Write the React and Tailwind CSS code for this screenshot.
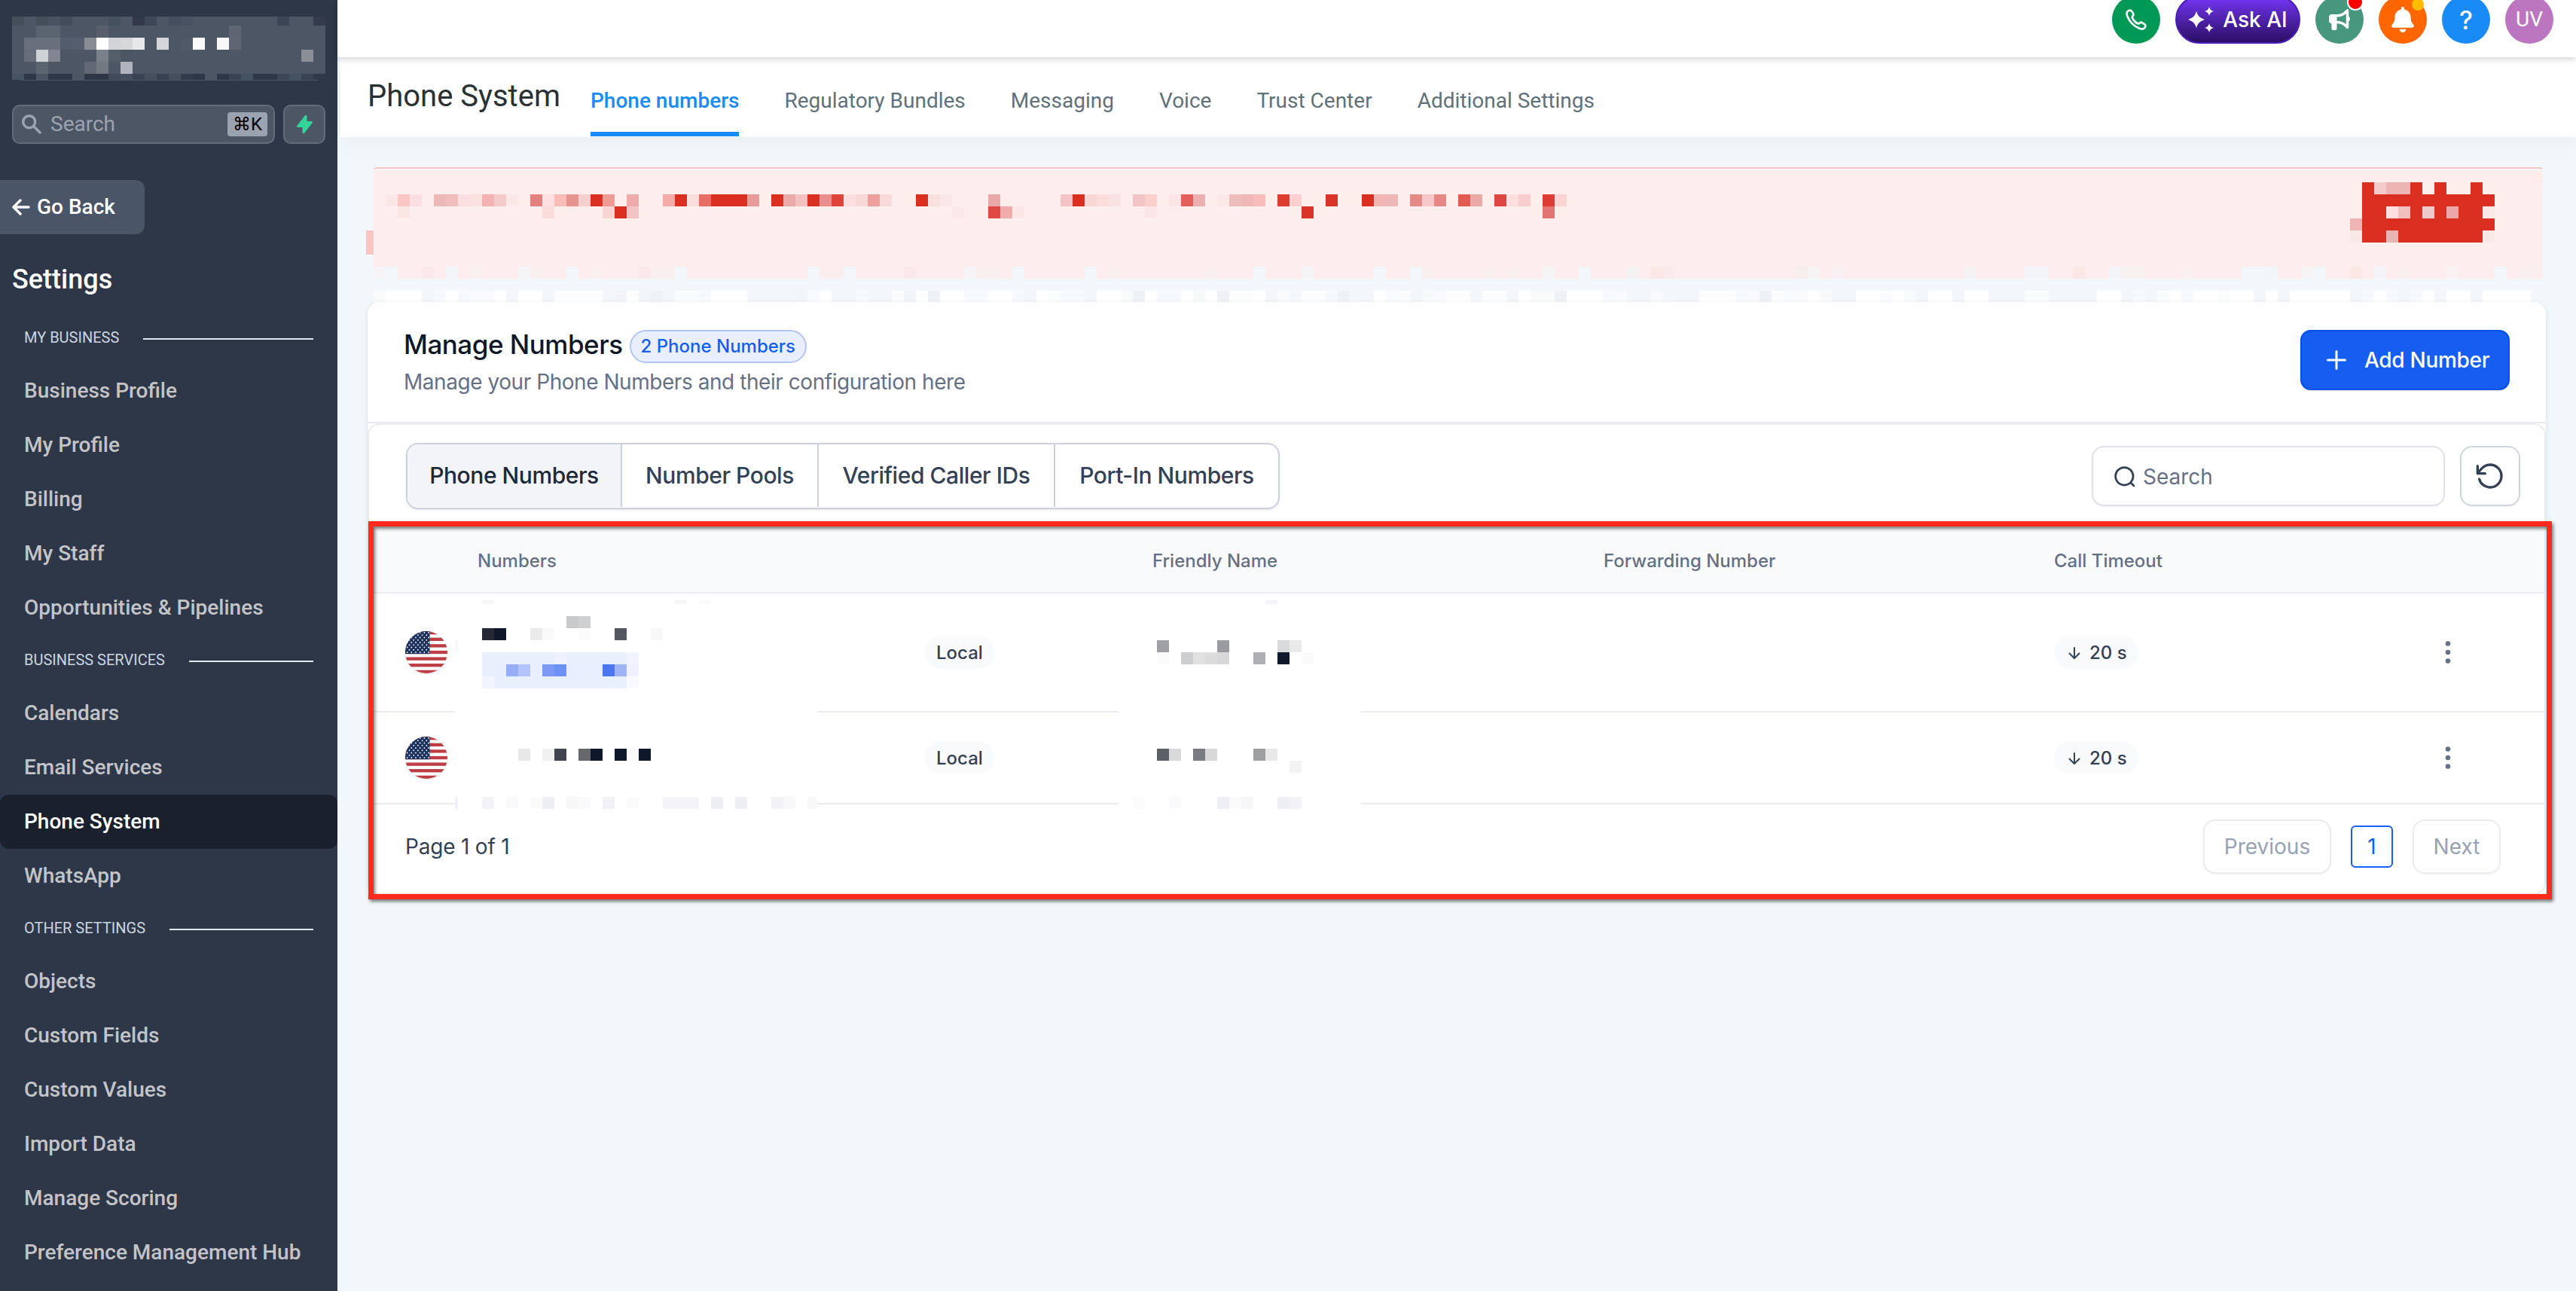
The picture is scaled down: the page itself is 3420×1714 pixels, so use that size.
import React from 'react';
import { FaBell, FaBullhorn } from 'react-icons/fa6';

const CELL = 16;

const SECTIONS = [
  {
    title: 'MY BUSINESS',
    items: ['Business Profile', 'My Profile', 'Billing', 'My Staff', 'Opportunities & Pipelines'],
  },
  {
    title: 'BUSINESS SERVICES',
    items: ['Calendars', 'Email Services', 'Phone System', 'WhatsApp'],
  },
  {
    title: 'OTHER SETTINGS',
    items: ['Objects', 'Custom Fields', 'Custom Values', 'Import Data', 'Manage Scoring', 'Preference Management Hub'],
  },
];

const HEADER_TABS = ['Phone numbers', 'Regulatory Bundles', 'Messaging', 'Voice', 'Trust Center', 'Additional Settings'];

// Mosaic cells: [column, row, span, color, height in rows]
const ACCOUNT_CELLS = [
  [0, -0.75, 26, '#4d5665', 0.75], [0, 0, 26, '#4d5665', 4],
  [0, -0.75, 1, '#454f5c', 0.75], [2, -0.75, 1, '#454f5c', 0.75], [3, -0.75, 1, '#495362', 0.75], [4, -0.75, 1, '#434c5b', 0.75],
  [8, -0.75, 1, '#445260', 0.75], [10, -0.75, 1, '#32394b', 0.75], [11, -0.75, 1, '#3c4656', 0.75], [13, -0.75, 1, '#444e5e', 0.75],
  [14, -0.75, 1, '#495262', 0.75], [22, -0.75, 1, '#3c4555', 0.75], [25, -0.75, 1, '#333b4d', 0.75],
  [2, 0, 2, '#59646f'], [7, 0, 1, '#5a5f6d'], [18, 0, 1, '#5e6572'],
  [1, 1, 3, '#69707c'], [4, 1, 1, '#525c6d'], [5, 1, 1, '#555e6e'], [6, 1, 1, '#888d94'], [7, 1, 1, '#ffffff'],
  [8, 1, 1, '#d3d4d8'], [9, 1, 1, '#d6d7d9'], [10, 1, 1, '#e7e8ea'], [12, 1, 1, '#d4d5d9'], [13, 1, 1, '#4b5765'],
  [14, 1, 1, '#505968'], [15, 1, 1, '#f9f9f9'], [17, 1, 1, '#f7f7f7'], [18, 1, 1, '#5f6571'],
  [1, 2, 1, '#676d79'], [2, 2, 1, '#ced2d4'], [3, 2, 1, '#818690'], [7, 2, 1, '#79828a'], [8, 2, 1, '#545f6a'], [24, 2, 1, '#8b8f95'],
  [2, 3, 1, '#5a666f'], [6, 3, 1, '#636874'], [7, 3, 1, '#727981'], [9, 3, 1, '#b1b4bd'],
  [0, 4, 1, '#455363', 0.5], [2, 4, 1, '#4d5665', 0.5], [5, 4, 1, '#4d5665', 0.5], [8, 4, 1, '#404a5a', 0.5], [9, 4, 1, '#444e5e', 0.5],
  [10, 4, 1, '#3a4454', 0.5], [11, 4, 1, '#454f5c', 0.5], [12, 4, 1, '#384252', 0.5], [13, 4, 1, '#454f5c', 0.5], [14, 4, 1, '#333c4d', 0.5],
  [16, 4, 1, '#4d5665', 0.5], [18, 4, 1, '#3a4454', 0.5], [19, 4, 1, '#445261', 0.5], [22, 4, 1, '#3c4656', 0.5], [23, 4, 1, '#445261', 0.5],
  [24, 4, 1, '#3a4354', 0.5], [25, 4, 1, '#303849', 0.5],
];

const R = '#da2e20';
const BG = '#f1f7fa';
const BANNER_CELLS = [
  [0, 0, 180, '#fceeec', 9],
  [-0.625, 5, 0.625, '#f8c5c4', 2], [179, 0, 1, '#fdebea'],
  // first text line
  [1, 2, 1, '#fbe6e6'], [2, 2, 1, '#fac6c4'], [3, 2, 1, '#fbdfe0'], [5, 2, 1, '#edb8b8'], [6, 2, 1, '#f0bdbc'], [7, 2, 1, '#fbdfe0'],
  [8, 2, 1, '#f9e2e0'], [9, 2, 1, '#f4b3b2'], [10, 2, 1, '#f5cbca'], [11, 2, 1, '#fae8e7'], [13, 2, 1, '#e37f7c'], [14, 2, 1, '#fbdfe1'],
  [15, 2, 1, '#f8bcb9'], [16, 2, 1, '#e79491'], [17, 2, 1, '#f4cfce'], [18, 2, 1, R], [19, 2, 1, '#ef9a94'], [21, 2, 1, '#efabab'],
  [24, 2, 1, '#f4acab'], [25, 2, 1, R], [26, 2, 1, '#f9dede'], [27, 2, 1, '#e56d66'], [28, 2, 3, R], [31, 2, 1, '#e79a98'],
  [33, 2, 1, R], [34, 2, 1, '#ebaaa9'], [35, 2, 1, '#f2c2c2'], [36, 2, 1, R], [37, 2, 1, '#e9908f'], [38, 2, 1, '#e04438'],
  [39, 2, 1, '#fbdedf'], [40, 2, 1, '#f8d8d6'], [41, 2, 1, '#eea09d'], [42, 2, 1, '#f9dada'], [45, 2, 1, R], [46, 2, 1, '#f8e0df'],
  [47, 2, 1, '#fae7e7'], [51, 2, 1, '#eaa9a8'], [57, 2, 1, '#f2c4c6'], [58, 2, 1, R], [59, 2, 1, '#f8d6d4'], [60, 2, 1, '#fbdedb'],
  [61, 2, 1, '#f8e2e2'], [63, 2, 1, '#f2c4c6'], [64, 2, 1, '#fad0cc'], [66, 2, 1, '#fbe4e5'], [67, 2, 1, '#e3605a'], [68, 2, 1, '#edb0b0'],
  [70, 2, 1, '#fae9e7'], [71, 2, 1, '#edbdbc'], [72, 2, 1, '#edb8b5'], [73, 2, 1, '#f8bdba'], [75, 2, 1, '#dd3c31'], [76, 2, 1, '#f9cfcf'],
  [79, 2, 1, '#da3429'], [82, 2, 1, R], [83, 2, 1, '#f1b5b3'], [84, 2, 1, '#eeb8b9'], [86, 2, 1, '#e58987'], [87, 2, 1, '#f5c7c8'],
  [88, 2, 1, '#e48785'], [90, 2, 1, '#e25a52'], [91, 2, 1, '#eda9a6'], [93, 2, 1, '#dc4541'], [94, 2, 1, '#f9dfde'], [95, 2, 1, '#f7cdce'],
  [97, 2, 1, '#dd3c33'], [98, 2, 1, '#fbd3d2'],
  // second text line
  [2, 3, 1, '#fbe6e4'], [14, 3, 1, '#fadcda'], [19, 3, 1, '#f7d5d3'], [20, 3, 1, R], [21, 3, 1, '#f2c3c4'], [48, 3, 1, '#fae9e8'],
  [51, 3, 1, '#df4843'], [52, 3, 1, '#f1abaa'], [53, 3, 1, '#fbe5e6'], [64, 3, 1, '#fce5e9'], [77, 3, 1, '#da3429'], [97, 3, 1, '#e27473'],
  // action button
  [165, 1, 1, R], [166, 1, 1, '#f3cbca'], [167, 1, 2, '#ebb5b5'], [169, 1, 1, R], [171, 1, 1, R], [174, 1, 1, R],
  [165, 2, 11, R],
  [165, 3, 10, R], [167, 3, 1, '#fddfdf'], [168, 3, 1, '#f1bfbf'], [170, 3, 1, '#efcaca'], [172, 3, 1, '#eaa9a8'], [175, 3, 1, '#fbe8e8'],
  [164, 4, 1, '#efb4b4'], [165, 4, 11, R],
  [164, 5, 1, '#f8e9e8'], [165, 5, 10, R], [167, 5, 1, '#e9b5b4'], [175, 5, 1, '#f8e8e7'],
  // bottom edge
  [0, 8, 1, '#f6f4f6'], [1, 8, 1, BG], [4, 8, 1, '#fbe9e9'], [6, 8, 1, '#f3f6f9'], [8, 8, 1, '#f9f1f0'], [12, 8, 1, '#f5f5f7'],
  [13, 8, 1, '#f9efee'], [16, 8, 1, BG], [18, 8, 1, '#f9f0ef'], [22, 8, 1, '#fbe9e9'], [23, 8, 2, '#f9efed'], [25, 8, 1, BG],
  [36, 8, 1, BG], [37, 8, 2, '#f9eeed'], [39, 8, 1, BG], [44, 8, 1, '#fbe9e9'], [49, 8, 1, '#f6f4f6'], [50, 8, 1, '#f9efee'],
  [51, 8, 1, '#f9f0ee'], [53, 8, 1, BG], [59, 8, 1, BG], [61, 8, 1, '#f9efef'], [69, 8, 1, '#f9f0ee'], [73, 8, 1, BG],
  [77, 8, 1, '#f4f4f6'], [83, 8, 1, BG], [86, 8, 1, BG], [87, 8, 1, '#f9efef'], [92, 8, 1, '#f9efee'], [94, 8, 1, '#f9efee'],
  [97, 8, 1, '#f5f5f5'], [100, 8, 1, BG], [104, 8, 1, '#f5f2f4'], [106, 8, 1, '#fbe7e4'], [107, 8, 1, '#fbeaea'], [118, 8, 1, '#f5eeec'],
  [119, 8, 1, '#f5f3f3'], [121, 8, 1, '#f8f0f2'], [132, 8, 1, '#f5f2f4'], [137, 8, 2, '#f3f4f7'], [141, 8, 1, '#fbe7e4'], [144, 8, 1, '#f3f4f7'],
  [145, 8, 2, '#f7f1f0'], [150, 8, 1, '#faf0ee'], [155, 8, 2, BG], [157, 8, 1, '#f3f6f8'], [160, 8, 1, '#f6f4f4'], [161, 8, 1, BG],
  [164, 8, 1, '#fbe8e5'], [166, 8, 1, '#f4f4f8'], [168, 8, 1, '#f9efee'], [172, 8, 1, '#f8f2f2'], [176, 8, 1, BG], [178, 8, 1, '#f9f0ee'],
  // strip above the card
  [0, 10, 1, '#f8fafb'], [1, 10, 3, '#ffffff'], [5, 10, 1, '#f6fafd'], [6, 10, 1, '#ffffff'], [7, 10, 1, '#f4f9fd'], [8, 10, 2, '#f8fafd'],
  [10, 10, 1, '#ffffff'], [12, 10, 2, '#ffffff'], [15, 10, 4, '#fdfeff'], [19, 10, 1, '#f3f7fb'], [20, 10, 1, '#f2f4f7'], [21, 10, 1, '#fdfefe'],
  [22, 10, 1, '#f3f6f9'], [23, 10, 1, '#edf2f5'], [25, 10, 2, '#fafdff'], [27, 10, 1, '#f7fafd'], [28, 10, 3, '#ffffff'], [35, 10, 1, '#f3f6f9'],
  [36, 10, 1, '#f8fbff'], [37, 10, 1, '#ffffff'], [40, 10, 1, '#f6f9fd'], [41, 10, 1, '#f3f6fa'], [43, 10, 1, '#fbfcfd'], [44, 10, 1, '#f2f5f8'],
  [45, 10, 1, '#fdfefe'], [46, 10, 1, '#edf2f5'], [47, 10, 2, '#ffffff'], [49, 10, 2, '#f5fafe'], [51, 10, 2, '#ffffff'], [53, 10, 1, '#f4f9fd'],
  [55, 10, 1, '#ffffff'], [56, 10, 1, '#fafefd'], [57, 10, 2, '#f5fafd'], [60, 10, 2, '#ffffff'], [62, 10, 1, '#f8fdfc'], [63, 10, 1, '#edf2f6'],
  [64, 10, 1, '#ffffff'], [65, 10, 2, '#f5f9fc'], [67, 10, 1, '#ffffff'], [68, 10, 1, '#f5f9fa'], [69, 10, 1, '#ffffff'], [70, 10, 1, '#edf2f6'],
  [71, 10, 2, '#fcfefd'], [73, 10, 1, '#ffffff'], [74, 10, 1, '#f3f7fa'], [75, 10, 1, '#f9fafc'], [76, 10, 1, '#f4f8fc'], [77, 10, 2, '#fbfdfe'],
  [79, 10, 1, '#f5f9fe'], [80, 10, 1, '#edf2f6'], [81, 10, 1, '#f4f8fc'], [83, 10, 1, '#ffffff'], [84, 10, 1, '#f8fbfe'], [85, 10, 1, '#fbfcfe'],
  [87, 10, 1, '#f6fafa'], [88, 10, 1, '#fafbfe'], [89, 10, 2, '#fefefe'], [91, 10, 1, '#f3f8fa'], [92, 10, 2, '#fbfdfe'], [95, 10, 1, '#ffffff'],
  [96, 10, 2, '#fafcfc'], [98, 10, 1, '#edf2f6'], [99, 10, 3, '#ffffff'], [102, 10, 1, '#f6fafe'], [103, 10, 1, '#f9fbfe'], [106, 10, 1, '#fafbfe'],
  [107, 10, 1, '#f4f8fb'], [110, 10, 3, '#fefeff'], [113, 10, 1, '#f5fafe'], [114, 10, 1, '#f9fafd'], [115, 10, 1, '#edf2f6'], [116, 10, 1, '#fcfdff'],
  [117, 10, 1, '#f6fbff'], [118, 10, 1, '#fafbfd'], [119, 10, 1, '#ffffff'], [120, 10, 1, '#f7f9fb'], [123, 10, 2, '#ffffff'], [125, 10, 1, '#fafcff'],
  [126, 10, 1, '#ffffff'], [127, 10, 1, '#f7fbfb'], [129, 10, 2, '#ffffff'], [132, 10, 2, '#ffffff'], [137, 10, 2, '#f9fdfd'], [139, 10, 2, '#f3f7fb'],
  [143, 10, 2, '#ffffff'], [146, 10, 1, '#f6fafd'], [148, 10, 1, '#fafdfd'], [149, 10, 1, '#ffffff'], [150, 10, 1, '#f6fafe'], [151, 10, 2, '#ffffff'],
  [153, 10, 1, '#f9fdfd'], [154, 10, 2, '#ffffff'], [157, 10, 1, '#ffffff'], [159, 10, 5, '#ffffff'], [165, 10, 1, '#f7fafd'], [166, 10, 1, '#ffffff'],
  [167, 10, 1, '#f5fafd'], [168, 10, 1, '#f3f7fb'], [169, 10, 1, '#f6fafe'], [170, 10, 1, '#ffffff'], [172, 10, 2, '#ffffff'], [175, 10, 4, '#ffffff'],
];

const NUMBER_CELLS = [
  [0, -0.3, 1, '#f5f6f7', 0.3], [16, -0.3, 1, '#f5f6f7', 0.3], [18, -0.3, 1, '#fafafb', 0.3],
  [7, 1, 1, '#c9cacc'], [8, 1, 1, '#cfd0d2'],
  [0, 2, 1, '#252933'], [1, 2, 1, '#0f172a'], [4, 2, 1, '#ebebeb'], [5, 2, 1, '#fafafa'], [8, 2, 1, '#fcfcfc'], [11, 2, 1, '#535760'], [14, 2, 1, '#f8f8f8'],
  [-2.25, 3, 0.25, '#fdf7f7'],
  [0, 4, 12, '#e8effd', 3], [6, 4, 1, '#eff3ff'], [12, 4, 1, '#f0f4ff'],
  [2, 5, 1, '#96adf8'], [3, 5, 1, '#b2c4fb'], [5, 5, 1, '#7c9af5'], [6, 5, 1, '#6c92f5'], [10, 5, 1, '#4c76ef'], [11, 5, 1, '#9fb3f7'], [12, 5, 1, '#eef1ff'],
  [0, 6, 1, '#f2f5ff'], [12, 6, 1, '#f8faff'],
  [3, 12, 1, '#e8e8e8'], [5, 12, 1, '#f0f0f0'], [6, 12, 1, '#40444e'], [8, 12, 1, '#67686c'], [9, 12, 1, '#0f172a'], [11, 12, 1, '#0f172a'],
  [12, 12, 1, '#fafafa'], [13, 12, 1, '#0f172a'],
  [-2.25, 16, 0.25, '#f0f0f6'], [0, 16, 1, '#f3f3f7'], [2, 16, 1, '#fafafc'], [4, 16, 1, '#fbfbfb'], [5, 16, 1, '#eeeff5'], [7, 16, 1, '#f7f7f8'],
  [8, 16, 1, '#f9f9fb'], [10, 16, 1, '#f2f1f5'], [12, 16, 1, '#fbfbfb'], [15, 16, 3, '#f4f4f8'], [19, 16, 1, '#eeeff5'], [21, 16, 1, '#eeeff5'],
  [24, 16, 1, '#f3f3f7'], [25, 16, 1, '#f8f8fa'], [27, 16, 1, '#f8f8f8'],
];

const FRIENDLY_CELLS = [
  [9, -0.3, 1, '#f3f4f7', 0.3],
  [0, 3, 1, '#9ea0a5'], [5, 3, 1, '#9a9b9e'], [10, 3, 1, '#d9dadc'], [11, 3, 1, '#e9e9e9'],
  [0, 4, 1, '#fbfbfb'], [2, 4, 1, '#cdcecf'], [3, 4, 1, '#e1e1e2'], [4, 4, 1, '#dcdcdc'], [5, 4, 1, '#d8d8da'], [8, 4, 1, '#aeb0b3'],
  [10, 4, 1, '#0f172a'], [12, 4, 1, '#f9f9f9'],
  [0, 12, 1, '#5c5f68'], [1, 12, 1, '#d8d9da'], [3, 12, 1, '#797b83'], [4, 12, 1, '#d8d8d8'], [8, 12, 1, '#9e9fa1'], [9, 12, 1, '#e8e8e8'],
  [11, 13, 1, '#f3f3f3'],
  [-2, 16, 1, '#fcfcfc'], [1, 16, 1, '#fafafc'], [5, 16, 1, '#eeeff5'], [6, 16, 1, '#fbfbfb'], [7, 16, 1, '#f6f6f8'], [10, 16, 1, '#eeeff5'], [11, 16, 1, '#f3f2f7'],
];

function Mosaic({ cells, x = 0, y = 0, width, height, className }) {
  return (
    <svg width={width} height={height} shapeRendering="crispEdges" className={className}>
      {cells.map(([col, row, span, color, rows = 1], i) => (
        <rect key={i} x={x + col * CELL} y={y + row * CELL} width={span * CELL} height={rows * CELL} fill={color} />
      ))}
    </svg>
  );
}

function UsFlag() {
  const stripe = 56 / 13;
  const stars = [];
  for (let r = 0; r < 9; r++) {
    for (let c = 0; c < 6; c++) {
      stars.push([(r % 2 ? 5.5 : 2.6) + c * 5.7, 2 + r * 3.25]);
    }
  }
  return (
    <svg viewBox="0 0 56 56" className="size-14 rounded-full shadow-sm">
      <rect width="56" height="56" fill="#ffffff" />
      {[0, 2, 4, 6, 8, 10, 12].map((i) => (
        <rect key={i} y={i * stripe} width="56" height={stripe} fill="#bd3d44" />
      ))}
      <rect width="32.5" height={stripe * 7} fill="#1b3160" />
      {stars.filter(([cx]) => cx < 31.5).map(([cx, cy], i) => (
        <circle key={i} cx={cx} cy={cy} r="0.9" fill="#ffffff" />
      ))}
    </svg>
  );
}

function Sidebar() {
  return (
    <aside className="flex h-[1714px] w-[448px] shrink-0 flex-col overflow-hidden bg-[#2d3748] font-[Roboto,sans-serif]">
      <div className="px-4 pt-[22px]">
        <Mosaic cells={ACCOUNT_CELLS} y={12} width={416} height={84} className="block" />
        <div className="mx-[10px] h-px bg-[#4a5363]"></div>
      </div>

      <div className="mt-8 flex gap-[11px] px-4">
        <div className="flex h-[52px] w-[349px] items-center rounded-[10px] border-2 border-[#626b79] bg-[#4d5664] pr-2 pl-[11px]">
          <svg viewBox="0 0 26 26" className="size-[26px]" fill="none" stroke="#9ca3b0" strokeWidth="3.4" strokeLinecap="round">
            <circle cx="9.7" cy="9.7" r="8" />
            <path d="M15.8 15.8L24 24" />
          </svg>
          <span className="ml-3 text-[28px] text-[#9ca3b0]">Search</span>
          <kbd className="ml-auto flex h-8 w-[53px] items-center justify-center rounded bg-[#9ca3b0] font-[Roboto,'DejaVu_Sans',sans-serif] text-2xl text-black">⌘K</kbd>
        </div>
        <div className="flex h-[52px] w-14 items-center justify-center rounded-[10px] border-2 border-[#626b79] bg-[#4d5664]">
          <svg viewBox="3 1 14 18" preserveAspectRatio="none" className="h-6 w-[21px]" fill="#34d399">
            <path d="M11.3 1.046A1 1 0 0112 2v5h4a1 1 0 01.82 1.573l-7 10A1 1 0 018 18v-5H4a1 1 0 01-.82-1.573l7-10a1 1 0 011.12-.38z" />
          </svg>
        </div>
      </div>

      <div className="mt-12 flex h-[72px] w-48 items-center rounded-r-xl bg-[#4a5568] pl-4">
        <svg viewBox="0 0 24 22" className="h-[22px] w-6" fill="none" stroke="#ffffff" strokeWidth="3.4" strokeLinecap="round" strokeLinejoin="round">
          <path d="M22 11H2M11 2L2 11L11 20" />
        </svg>
        <span className="ml-[9px] text-[28px] font-medium text-white">Go Back</span>
      </div>

      <h2 className="mt-9 h-[68px] pl-4 text-4xl leading-[48px] font-medium text-white">Settings</h2>

      {SECTIONS.map((section) => (
        <div key={section.title}>
          <div className="flex h-[68px] items-center pr-8 pl-8">
            <span className="pb-0.5 text-xl text-[#cbd5e0]">{section.title}</span>
            <div className="mt-0.5 ml-8 h-0.5 flex-1 bg-[#e2e8f0]"></div>
          </div>
          {section.items.map((item) => (
            <div
              key={item}
              className={`flex h-[72px] items-center pb-px pl-8 text-[28px] font-medium ${item === 'Phone System' ? 'rounded-[12px] bg-[#1a202c] text-white' : 'text-[#c3c4c8]'}`}
            >
              {item}
            </div>
          ))}
        </div>
      ))}
    </aside>
  );
}

function TopBar() {
  return (
    <div className="relative z-10 flex h-[76px] items-end justify-end gap-5 bg-white pr-[30px] pb-[18px] shadow-[0_3px_8px_rgba(0,0,0,0.16)]">
      <div className="flex size-16 items-center justify-center rounded-full bg-[#009855]">
        <svg viewBox="0 0 28 28" className="size-7" fill="none" stroke="#ffffff" strokeWidth="2.7" strokeLinejoin="round">
          <path d="M2.6 3.2C4.6 1 7.2 1 8.6 3.4L10.4 6.6C11.4 8.4 8.2 9.6 8.8 11.4C10.4 15 13 17.8 16.6 19.4C18.4 20 19.4 16.8 21.4 17.8L24.8 19.8C27 21.2 26.8 23.6 24.8 25.4C23.2 27 20.6 26.8 18 25.6C10.8 22.6 5.4 17 2.4 9.8C1.4 7.2 1.2 4.8 2.6 3.2Z" />
        </svg>
      </div>
      <div className="flex h-16 w-[166px] items-center justify-center gap-3 rounded-full border-2 border-[#4a1fb8] bg-linear-to-b from-[#7536f5] to-[#2b0f66] text-white">
        <svg viewBox="0 0 34 34" className="size-[34px]" fill="#ffffff">
          <path d="M11 5.5C12.4 11.6 15.4 14.6 22 17C15.4 19.4 12.4 22.4 11 28.5C9.6 22.4 6.6 19.4 0 17C6.6 14.6 9.6 11.6 11 5.5Z" />
          <path d="M28 0C28.8 3.4 30.6 5.2 34 6C30.6 6.8 28.8 8.6 28 12C27.2 8.6 25.4 6.8 22 6C25.4 5.2 27.2 3.4 28 0Z" />
          <path d="M28 22C28.8 25.4 30.6 27.2 34 28C30.6 28.8 28.8 30.6 28 34C27.2 30.6 25.4 28.8 22 28C25.4 27.2 27.2 25.4 28 22Z" />
        </svg>
        <span className="text-[28px] font-medium">Ask AI</span>
      </div>
      <div className="relative flex size-16 items-center justify-center rounded-full bg-[#47977f]">
        <FaBullhorn className="size-7 text-white" />
        <span className="absolute -top-0.5 right-0 size-[22px] rounded-full border-2 border-white bg-[#ff0000]"></span>
      </div>
      <div className="relative flex size-16 items-center justify-center rounded-full bg-[#ff6600]">
        <FaBell className="h-[34px] w-[30px] text-white" />
        <span className="absolute top-1 right-1 size-4 rounded-full bg-[#ffbc00]"></span>
      </div>
      <div className="flex size-16 items-center justify-center rounded-full bg-[#188bf6] text-[34px] font-medium text-white">?</div>
      <div className="flex size-16 items-center justify-center rounded-full bg-[#bb76bf] font-[Roboto,sans-serif] text-[28px] text-white">UV</div>
    </div>
  );
}

function PageHeader() {
  return (
    <div className="ml-1 flex h-[106px] bg-white pl-[36px] font-[Roboto,sans-serif] shadow-[0_10px_24px_rgba(0,0,0,0.03)]">
      <h1 className="w-[296px] pt-[27px] text-[40px] leading-[50px] text-[#2a3135]">Phone System</h1>
      <nav className="flex gap-[60px]">
        {HEADER_TABS.map((tab, i) => (
          <div
            key={tab}
            className={`h-[105px] pt-[38px] text-[28px] leading-[40px] ${i === 0 ? 'border-b-[6px] border-[#188bf6] font-medium text-[#188bf6]' : 'text-[#607179]'}`}
          >
            {tab}
          </div>
        ))}
      </nav>
    </div>
  );
}

function Banner() {
  return (
    <div className="pt-10 pl-[38px]">
      <div className="ml-[10px] h-1 w-[2880px] rounded-t-[8px] border-t-2 border-[#f7c6c4]"></div>
      <Mosaic cells={BANNER_CELLS} x={10} width={2890} height={175} className="block" />
    </div>
  );
}

function Pill({ children }) {
  return (
    <div className="flex h-11 w-fit items-center rounded-full bg-[#f9fafb] px-[15px] pt-px text-2xl font-medium text-[#344054]">{children}</div>
  );
}

function NumberRow({ className }) {
  return (
    <div className={`grid grid-cols-[145px_593px_303px_598px_598px_1fr] items-center border-b-2 border-[#eaecf0] ${className}`}>
      <div className="pl-12"><UsFlag /></div>
      <div></div>
      <div><Pill>Local</Pill></div>
      <div></div>
      <div></div>
      <div className="flex items-center">
        <Pill>
          <svg viewBox="0 0 16 16" className="mr-3 ml-1 size-4" fill="none" stroke="#344054" strokeWidth="2" strokeLinecap="round" strokeLinejoin="round">
            <path d="M8 1V15M1.5 8.5L8 15L14.5 8.5" />
          </svg>
          20 s
        </Pill>
        <svg viewBox="0 0 8 32" className="ml-[407px] h-8 w-2" fill="#667085">
          <circle cx="4" cy="4.5" r="3.3" />
          <circle cx="4" cy="16" r="3.3" />
          <circle cx="4" cy="27.5" r="3.3" />
        </svg>
      </div>
    </div>
  );
}

function NumbersCard() {
  return (
    <section className="relative ml-10 w-[2892px] rounded-t-2xl bg-white shadow-[0_2px_6px_rgba(16,24,40,0.10)]">
      <div className="flex h-[161px] items-start justify-between border-b-2 border-[#e8eaef] pr-12 pl-12">
        <div className="pt-[33px]">
          <div className="flex items-start gap-[9px]">
            <h2 className="text-[35px] leading-[46px] font-medium tracking-[-0.5px] text-[#101828]">Manage Numbers</h2>
            <span className="mt-1 flex h-11 items-center rounded-full border-2 border-[#b2c5fb] bg-[#e9effe] px-[13px] text-2xl font-medium text-[#155eef]">2 Phone Numbers</span>
          </div>
          <p className="mt-[5px] text-[28px] leading-[40px] tracking-[-0.45px] text-[#667085]">Manage your Phone Numbers and their configuration here</p>
        </div>
        <button className="mt-[37px] flex h-20 w-[278px] items-center rounded-[14px] border-2 border-[#004eeb] bg-[#155eef] pl-[33px] text-[28px] font-medium tracking-[-0.3px] text-white shadow-sm">
          <svg viewBox="0 0 26 26" className="mr-6 size-[26px]" fill="none" stroke="#ffffff" strokeWidth="3" strokeLinecap="round">
            <path d="M13 1.5V24.5M1.5 13H24.5" />
          </svg>
          Add Number
        </button>
      </div>

      <div className="rounded-2xl border-2 border-[#eaecf0]">
        <div className="flex h-[134px] items-start justify-between pr-8 pl-[49px]">
          <div className="mt-6 flex h-[88px] divide-x-2 divide-[#cdd2dc] overflow-hidden rounded-2xl border-2 border-[#cdd2dc] pb-px text-[30px] font-medium tracking-[-0.45px] text-[#344054] shadow-sm">
            <div className="flex w-[285px] items-center justify-center bg-[#f2f4f7] text-[#1d2939]">Phone Numbers</div>
            <div className="flex w-[261px] items-center justify-center">Number Pools</div>
            <div className="flex w-[314px] items-center justify-center">Verified Caller IDs</div>
            <div className="flex w-[296px] items-center justify-center">Port-In Numbers</div>
          </div>
          <div className="mt-7 flex gap-5">
            <div className="flex h-20 w-[469px] items-center rounded-2xl border-2 border-[#dfe2e8] pt-0.5 pl-[26px] text-[28px] text-[#667085] shadow-xs">
              <svg viewBox="0 0 24 24" className="mr-2 size-8" fill="none" stroke="#344054" strokeWidth="2" strokeLinecap="round" strokeLinejoin="round">
                <path d="M21 21L18 18" />
                <circle cx="11.5" cy="11.5" r="8.8" />
              </svg>
              Search
            </div>
            <div className="flex size-20 items-center justify-center rounded-2xl border-2 border-[#d0d5dd] shadow-xs">
              <svg viewBox="0 0 24 24" className="size-10" fill="none" stroke="#344054" strokeWidth="2" strokeLinecap="round" strokeLinejoin="round">
                <path d="M2 10C2 10 4.005 7.268 5.634 5.638C7.263 4.008 9.514 3 12 3C16.971 3 21 7.029 21 12C21 16.971 16.971 21 12 21C7.897 21 4.435 18.254 3.352 14.5M2 10V4M2 10H8" />
              </svg>
            </div>
          </div>
        </div>

        <div className="grid h-[90px] grid-cols-[144px_896px_599px_598px_1fr] items-center border-b-2 border-[#eaecf0] bg-[#f9fafc] pt-[5px] text-2xl font-medium text-[#667085]">
          <div></div>
          <div>Numbers</div>
          <div>Friendly Name</div>
          <div>Forwarding Number</div>
          <div>Call Timeout</div>
        </div>
        <div className="relative">
          <NumberRow className="h-[158px]" />
          <NumberRow className="h-[122px]" />
          <Mosaic cells={NUMBER_CELLS} x={36} y={12} width={481} height={284} className="absolute top-0.5 left-[114px] bg-white" />
          <Mosaic cells={FRIENDLY_CELLS} x={51} y={12} width={322} height={284} className="absolute top-0.5 left-[995px] bg-white" />
        </div>

        <div className="flex h-[118px] items-start justify-between pr-[58px] pl-12 text-[28px]">
          <span className="mt-9 leading-[40px] tracking-[-0.2px] text-[#344054]">Page 1 of 1</span>
          <div className="mt-5 flex items-center gap-[26px] text-[#98a2b3]">
            <div className="flex h-[72px] w-[170px] items-center justify-center rounded-2xl border-2 border-[#eaecf0] shadow-xs">Previous</div>
            <div className="flex size-14 items-center justify-center rounded-md border-2 border-[#155eef] text-[#155eef]">1</div>
            <div className="flex h-[72px] w-[117px] items-center justify-center rounded-2xl border-2 border-[#eaecf0] shadow-xs">Next</div>
          </div>
        </div>
      </div>

      {/* highlight frame around the table */}
      <div className="pointer-events-none absolute top-[291px] left-px h-[502px] w-[2899px] border-[7px] border-[#ff2a1b] drop-shadow-[2px_3px_2px_rgba(0,0,0,0.5)]"></div>
    </section>
  );
}

function App() {
  return (
    <div className="flex h-[1714px] w-[3420px] overflow-hidden bg-[#f1f7fa] font-[Inter,sans-serif]">
      <Sidebar />
      <main className="flex-1">
        <TopBar />
        <PageHeader />
        <Banner />
        <NumbersCard />
      </main>
    </div>
  );
}

export default App;
